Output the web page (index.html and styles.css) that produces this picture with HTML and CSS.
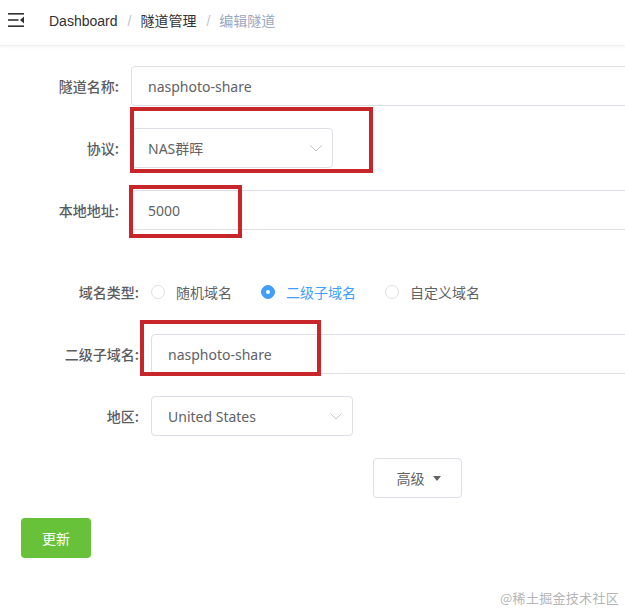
FILE: index.html
```html
<!DOCTYPE html>
<html lang="zh-CN">
<head>
<meta charset="utf-8">
<title>编辑隧道</title>
<link rel="stylesheet" href="styles.css">
</head>
<body>
<div class="page">
  <header class="navbar">
    <svg class="fold-icon" width="16" height="14" viewBox="0 0 16 14">
      <rect x="0" y="0" width="16" height="1.6" fill="#303133"/>
      <rect x="0" y="6.2" width="10.5" height="1.6" fill="#303133"/>
      <rect x="0" y="12.4" width="16" height="1.6" fill="#303133"/>
      <polygon points="16,3.6 16,10.4 12,7" fill="#303133"/>
    </svg>
    <nav class="crumbs">
      <span class="crumb">Dashboard</span>
      <span class="sep">/</span>
      <span class="crumb">隧道管理</span>
      <span class="sep">/</span>
      <span class="crumb current">编辑隧道</span>
    </nav>
  </header>

  <main class="form">
    <div class="row">
      <label class="label">隧道名称:</label>
      <div class="input wide">nasphoto-share</div>
    </div>
    <div class="row">
      <label class="label">协议:</label>
      <div class="input select s-proto">NAS群晖
        <svg class="chev" width="12" height="7" viewBox="0 0 12 7"><polyline points="0.5,0.5 6,6 11.5,0.5" fill="none" stroke="#c0c4cc" stroke-width="1"/></svg>
      </div>
      <div class="mark mark-1"></div>
    </div>
    <div class="row">
      <label class="label">本地地址:</label>
      <div class="input wide">5000</div>
      <div class="mark mark-2"></div>
    </div>

    <div class="row row-b spaced">
      <label class="label label-b">域名类型:</label>
      <div class="radios">
        <span class="radio"><span class="dot"></span>随机域名</span>
        <span class="radio checked"><span class="dot"></span>二级子域名</span>
        <span class="radio"><span class="dot"></span>自定义域名</span>
      </div>
    </div>
    <div class="row row-b">
      <label class="label label-b">二级子域名:</label>
      <div class="input wide">nasphoto-share</div>
      <div class="mark mark-3"></div>
    </div>
    <div class="row row-b">
      <label class="label label-b">地区:</label>
      <div class="input select s-region">United States
        <svg class="chev" width="12" height="7" viewBox="0 0 12 7"><polyline points="0.5,0.5 6,6 11.5,0.5" fill="none" stroke="#c0c4cc" stroke-width="1"/></svg>
      </div>
    </div>
    <div class="row adv-row">
      <button class="btn-adv">高级<span class="caret"></span></button>
    </div>
    <button class="btn-submit">更新</button>
  </main>

  <div class="watermark">@稀土掘金技术社区</div>
</div>
</body>
</html>
```

FILE: styles.css
```css
html, body {
  margin: 0;
  padding: 0;
  overflow: hidden;
  background: #fff;
}
body {
  font-family: "Liberation Sans", "Noto Sans CJK SC", sans-serif;
  font-size: 14px;
  color: #606266;
}
.page {
  position: relative;
  width: 625px;
  height: 611px;
  overflow: hidden;
}
.navbar {
  height: 46px;
  box-sizing: border-box;
  border-bottom: 1px solid #eef0f2;
  box-shadow: 0 1px 3px rgba(0, 21, 41, 0.05);
  display: flex;
  align-items: flex-start;
  padding: 13px 0 0 8px;
}
.fold-icon {
  display: block;
  flex: none;
}
.crumbs {
  margin-left: 25px;
  margin-top: 0;
  line-height: 16px;
  font-size: 14px;
  display: flex;
  white-space: nowrap;
}
.crumb { color: #303133; }
.crumb.current { color: #97a8be; }
.sep {
  color: #c0c4cc;
  margin: 0 9px 0 10px;
}
.form {
  padding-top: 20px;
  width: 760px;
}
.row {
  position: relative;
  display: flex;
  align-items: center;
  height: 40px;
  margin-bottom: 22px;
}
.row.spaced { margin-top: 42px; }
.label {
  flex: none;
  width: 131px;
  box-sizing: border-box;
  padding-right: 12px;
  text-align: right;
  color: #5a5c61;
  font-weight: 500;
  font-family: "Noto Sans CJK SC", sans-serif;
  font-size: 14px;
}
.label-b { width: 151px; }
.input {
  box-sizing: border-box;
  height: 40px;
  border: 1px solid #dcdfe6;
  border-radius: 4px;
  padding: 0 15px 0 16px;
  display: flex;
  align-items: center;
  color: #606266;
  font-size: 14px;
  font-family: "Noto Sans", "Noto Sans CJK SC", sans-serif;
  background: #fff;
}
.wide { width: 560px; }
.select { position: relative; }
.s-proto { width: 202px; }
.s-region { width: 202px; }
.chev {
  position: absolute;
  right: 10px;
  top: 16px;
}
.mark {
  position: absolute;
  box-sizing: border-box;
  border: 4px solid #c9262b;
  pointer-events: none;
}
.mark-1 { left: 130px; top: -21px; width: 243px; height: 66px; }
.mark-2 { left: 129px; top: -5px; width: 113px; height: 53px; }
.mark-3 { left: 140px; top: -14px; width: 181px; height: 56px; }
.radios {
  display: flex;
  align-items: center;
}
.radio {
  display: flex;
  align-items: center;
  margin-right: 29px;
  color: #606266;
  font-family: "Noto Sans CJK SC", sans-serif;
}
.dot {
  width: 14px;
  height: 14px;
  box-sizing: border-box;
  border: 1px solid #dcdfe6;
  border-radius: 50%;
  margin-right: 11px;
  position: relative;
  background: #fff;
}
.radio.checked { color: #409eff; }
.radio.checked .dot {
  background: #409eff;
  border-color: #409eff;
}
.radio.checked .dot::after {
  content: "";
  position: absolute;
  left: 4px;
  top: 4px;
  width: 4px;
  height: 4px;
  border-radius: 50%;
  background: #fff;
}
.adv-row { padding-left: 373px; }
.btn-adv {
  box-sizing: border-box;
  width: 89px;
  height: 40px;
  border: 1px solid #dcdfe6;
  border-radius: 4px;
  background: #fff;
  color: #606266;
  font-family: "Noto Sans CJK SC", sans-serif;
  font-size: 14px;
  display: flex;
  align-items: center;
  justify-content: center;
  padding: 0 0 0 2px;
}
.caret {
  width: 0;
  height: 0;
  border-left: 4px solid transparent;
  border-right: 4px solid transparent;
  border-top: 5px solid #606266;
  margin-left: 8px;
}
.btn-submit {
  display: block;
  margin: -2px 0 0 21px;
  box-sizing: border-box;
  width: 70px;
  height: 40px;
  border: none;
  border-radius: 4px;
  background: #67c23a;
  color: #fff;
  font-family: "Noto Sans CJK SC", sans-serif;
  font-size: 14px;
  padding: 0;
}
.watermark {
  position: absolute;
  right: 6px;
  bottom: 4px;
  font-family: "Noto Sans CJK SC", sans-serif;
  font-size: 13px;
  color: #b5b5b5;
  letter-spacing: 0.3px;
}
```
